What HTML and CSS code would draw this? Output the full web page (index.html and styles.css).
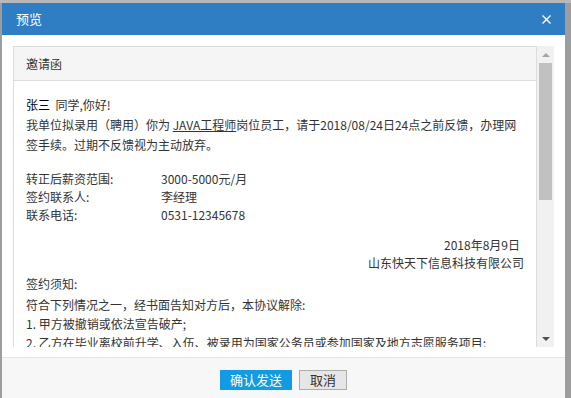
FILE: index.html
```html
<!DOCTYPE html>
<html lang="zh-CN">
<head>
    <meta charset="UTF-8">
    <title>预览</title>
    <link rel="stylesheet" href="styles.css">
</head>
<body>
    <div class="dialog">
        <div class="dialog-header">
            <span class="dialog-title">预览</span>
            <span class="dialog-close">
                <svg width="9" height="9" viewBox="0 0 9 9"><path d="M0.5 0.5 L8.5 8.5 M8.5 0.5 L0.5 8.5" stroke="#fff" stroke-width="1.4"/></svg>
            </span>
        </div>
        <div class="dialog-body">
            <div class="frame">
                <div class="frame-content">
                    <div class="panel">
                        <div class="panel-heading">邀请函</div>
                        <div class="panel-body">
                            <p class="greet"><span class="name">张三</span>&nbsp;&nbsp;同学,你好!</p>
                            <p class="intro">我单位拟录用（聘用）你为 <u>JAVA工程师</u>岗位员工，请于2018/08/24日24点之前反馈，办理网签手续。过期不反馈视为主动放弃。</p>
                            <table class="info">
                                <tr><td class="label">转正后薪资范围:</td><td>3000-5000元/月</td></tr>
                                <tr><td class="label">签约联系人:</td><td>李经理</td></tr>
                                <tr><td class="label">联系电话:</td><td>0531-12345678</td></tr>
                            </table>
                            <div class="sign">
                                <div class="date">2018年8月9日</div>
                                <div>山东快天下信息科技有限公司</div>
                            </div>
                            <div class="notice">
                                <div class="notice-title">签约须知:</div>
                                <div>符合下列情况之一，经书面告知对方后，本协议解除:</div>
                                <div>1. 甲方被撤销或依法宣告破产;</div>
                                <div>2. 乙方在毕业离校前升学、入伍、被录用为国家公务员或参加国家及地方志愿服务项目;</div>
                            </div>
                        </div>
                    </div>
                </div>
                <div class="scrollbar">
                    <div class="scroll-btn"><span class="arrow-up"></span></div>
                    <div class="scroll-track"><div class="scroll-thumb"></div></div>
                    <div class="scroll-btn"><span class="arrow-down"></span></div>
                </div>
            </div>
        </div>
        <div class="dialog-footer">
            <button class="btn btn-primary">确认发送</button>
            <button class="btn btn-default">取消</button>
        </div>
    </div>
</body>
</html>
```

FILE: styles.css
```css
html, body {
    height: 100%;
}
body {
    margin: 0;
    background: #9d9d9d;
    border-top: 3px solid #b8b8b8;
    box-sizing: border-box;
    font-family: "Microsoft YaHei", "Noto Sans CJK SC", sans-serif;
    font-size: 12px;
    color: #333;
    overflow: hidden;
}
.dialog {
    margin-left: 2px;
    width: 563px;
    height: 100%;
    background: #fff;
    display: flex;
    flex-direction: column;
}
.dialog-header {
    height: 32px;
    flex: none;
    background: #2f7dc3;
    color: #fff;
    display: flex;
    align-items: center;
    justify-content: space-between;
    padding: 0 14px 0 14px;
}
.dialog-title {
    font-size: 13px;
    line-height: 32px;
}
.dialog-close {
    display: flex;
    margin-top: 1px;
}
.dialog-body {
    padding: 11px 11px 10px 11px;
}
.frame {
    height: 301px;
    display: flex;
    overflow: hidden;
}
.frame-content {
    flex: 1;
    overflow: hidden;
}
.panel {
    border: 1px solid #ddd;
}
.panel-heading {
    height: 33px;
    line-height: 33px;
    background: #f5f5f5;
    border-bottom: 1px solid #ddd;
    padding: 0 12px;
}
.panel-body {
    padding: 14px 12px;
}
p {
    margin: 0;
    line-height: 20px;
}
.name {
    color: #000;
}
u {
    text-decoration-color: #333;
}
.info {
    border-collapse: collapse;
    margin-top: 15px;
}
.info td {
    padding: 0;
    height: 18px;
    line-height: 18px;
}
.info .label {
    width: 135px;
}
.sign {
    margin-top: 12px;
    text-align: right;
    line-height: 18px;
}
.date {
    padding-right: 4px;
}
.notice {
    margin-top: 2px;
    line-height: 19px;
}
.notice-title {
    margin-bottom: 2px;
}
.scrollbar {
    width: 17px;
    flex: none;
    background: #f1f1f1;
    display: flex;
    flex-direction: column;
}
.scroll-btn {
    height: 17px;
    display: flex;
    align-items: center;
    justify-content: center;
}
.arrow-up {
    border-left: 4px solid transparent;
    border-right: 4px solid transparent;
    border-bottom: 4px solid #a3a3a3;
}
.arrow-down {
    border-left: 4px solid transparent;
    border-right: 4px solid transparent;
    border-top: 4px solid #505050;
}
.scroll-track {
    flex: 1;
}
.scroll-thumb {
    height: 137px;
    margin: 0 2px;
    background: #c1c1c1;
}
.dialog-footer {
    flex: 1;
    background: #f7f7f7;
    border-top: 1px solid #e5e5e5;
    display: flex;
    justify-content: center;
    align-items: flex-start;
    gap: 7px;
    padding-top: 12px;
}
.btn {
    font-family: inherit;
    font-size: 13px;
    height: 20px;
    line-height: 18px;
    border: 1px solid;
    border-radius: 0;
    cursor: pointer;
}
.btn-primary {
    background: #129be2;
    border-color: #129be2;
    color: #fff;
    padding: 0 9px;
}
.btn-default {
    background: #e6e6e6;
    border-color: #adadad;
    color: #333;
    padding: 0 10px;
}
```
